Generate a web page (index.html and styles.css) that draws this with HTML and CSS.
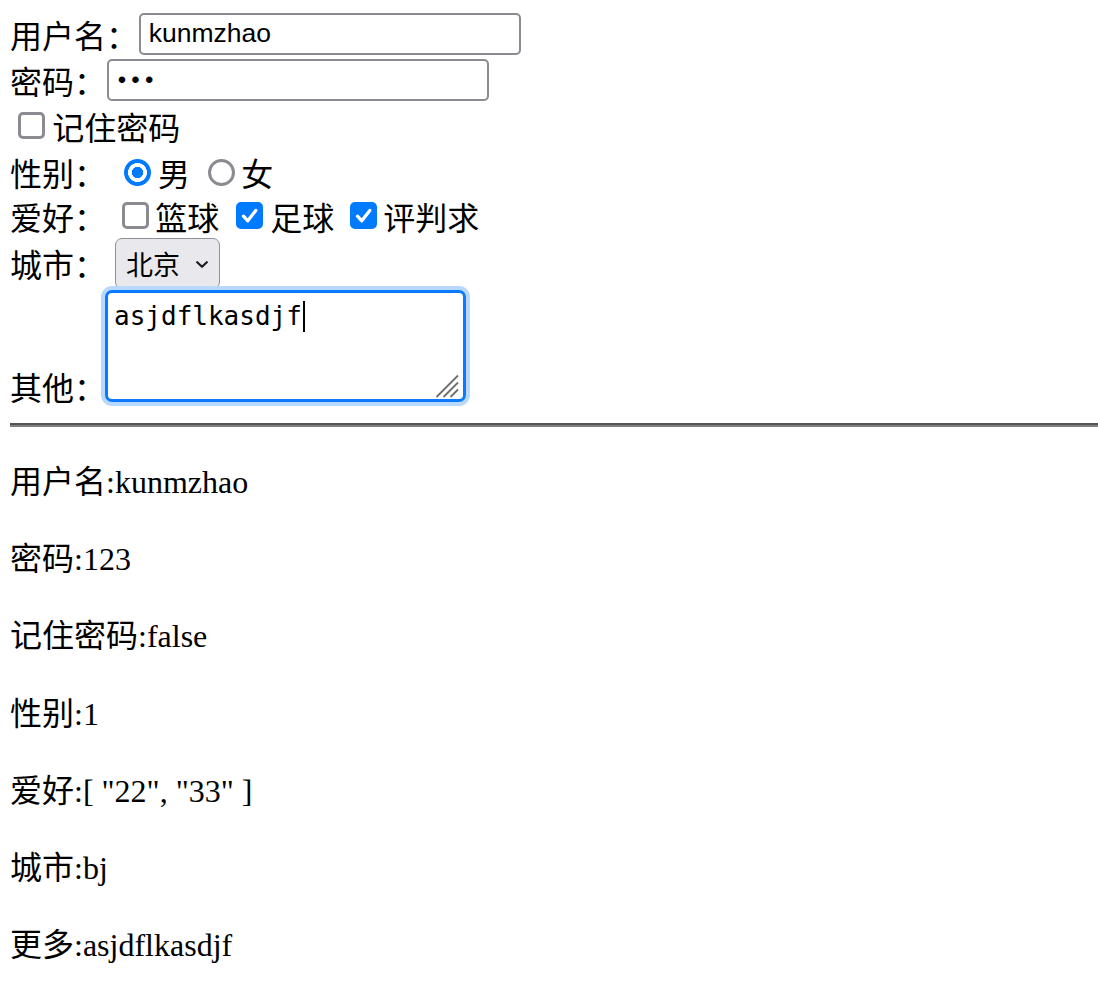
FILE: index.html
```html
<!DOCTYPE html>
<html lang="zh-CN">
<head>
<meta charset="utf-8">
<title>表单</title>
<link rel="stylesheet" href="styles.css">
</head>
<body>
<div class="page">
  <form class="form">
    <div class="row r1"><label class="lbl" for="u">用户名：</label><input id="u" class="text" type="text" value="kunmzhao"></div>
    <div class="row r2"><label class="lbl" for="p">密码：</label><input id="p" class="text pwd" type="password" value="123"></div>
    <div class="row r3">
      <label class="opt"><span class="cbwrap cb-remember"><input type="checkbox" class="cb"></span>记住密码</label>
    </div>
    <div class="row r4">
      <span class="lbl">性别：</span>
      <label class="opt"><input type="radio" name="g" class="rd rd1" value="1" checked>男</label>
      <label class="opt"><input type="radio" name="g" class="rd rd2" value="2">女</label>
    </div>
    <div class="row r5">
      <span class="lbl">爱好：</span>
      <label class="opt"><span class="cbwrap cb1"><input type="checkbox" class="cb" value="11"></span>篮球</label>
      <label class="opt"><span class="cbwrap cb2"><input type="checkbox" class="cb" value="22" checked><svg class="tick" viewBox="0 0 27 27"><path d="M7.5 14.2l4.3 4.6L19.8 8.4"/></svg></span>足球</label>
      <label class="opt"><span class="cbwrap cb3"><input type="checkbox" class="cb" value="33" checked><svg class="tick" viewBox="0 0 27 27"><path d="M7.5 14.2l4.3 4.6L19.8 8.4"/></svg></span>评判求</label>
    </div>
    <div class="row r6">
      <span class="lbl">城市：</span>
      <span class="selwrap">
        <select class="sel"><option value="bj">北京</option><option value="sh">上海</option></select>
        <svg class="chev" viewBox="0 0 12 7"><path d="M1.2 1.2l4.8 4.6 4.8-4.6"/></svg>
      </span>
    </div>
    <div class="row r7">
      <span class="lbl">其他：</span>
      <span class="tawrap">
        <textarea class="ta">asjdflkasdjf</textarea>
        <span class="caret"></span>
        <svg class="grip" viewBox="0 0 24 24"><path d="M1.5 23L23 1.5M8.5 23L23 8.5M15.5 23L23 15.5"/></svg>
      </span>
    </div>
  </form>
  <hr class="sep">
  <div class="result">
    <p>用户名:kunmzhao</p>
    <p>密码:123</p>
    <p>记住密码:false</p>
    <p>性别:1</p>
    <p>爱好:[ "22", "33" ]</p>
    <p>城市:bj</p>
    <p>更多:asjdflkasdjf</p>
  </div>
</div>
</body>
</html>
```

FILE: styles.css
```css
html, body {
  margin: 0;
  padding: 0;
  background: #fff;
  color: #000;
}

.page {
  padding: 10px 0 0 10px;
}

.form {
  margin: 0;
  font-family: "Noto Sans CJK SC", sans-serif;
  font-size: 32px;
  line-height: 32px;
}

.row {
  display: flex;
  align-items: center;
  white-space: nowrap;
}

.r1 { height: 47.7px; }
.r2 { height: 44.6px; }
.r3 { height: 46.8px; }
.r4 { height: 45.9px; }
.r5 { height: 42px; }
.r6 { height: 53px; }
.r7 { height: 112px; align-items: flex-end; }

.lbl {
  display: inline-block;
}

.opt {
  display: inline-flex;
  align-items: center;
}

/* text inputs */
.text {
  box-sizing: border-box;
  width: 382px;
  height: 42.3px;
  margin: 0 0 0 0.7px;
  padding: 0 8px;
  border: 2px solid #8b8b92;
  border-radius: 5px;
  background: #fff;
  color: #000;
  font-family: "Liberation Sans", sans-serif;
  font-size: 26.5px;
  outline: none;
}

.pwd {
  font-size: 24px;
  letter-spacing: 5.2px;
  padding-left: 9px;
}

/* checkboxes */
.cbwrap {
  display: inline-grid;
  margin-right: 7px;
}

.cbwrap > * {
  grid-area: 1 / 1;
}

.cb {
  appearance: none;
  -webkit-appearance: none;
  box-sizing: border-box;
  width: 27px;
  height: 27px;
  margin: 0;
  border: 3.4px solid #8b8b92;
  border-radius: 5px;
  background: #fff;
}

.cb:checked {
  background: #007aff;
  border-color: #007aff;
}

.tick {
  width: 27px;
  height: 27px;
  fill: none;
  stroke: #fff;
  stroke-width: 3.3;
  stroke-linecap: round;
  stroke-linejoin: round;
  pointer-events: none;
}

.cb-remember { margin-left: 8.3px; }
.cb1 { margin-left: 16.3px; margin-right: 6px; }
.cb2 { margin-left: 17px; margin-right: 7px; }
.cb3 { margin-left: 16px; margin-right: 6px; }

/* radios */
.rd {
  appearance: none;
  -webkit-appearance: none;
  box-sizing: border-box;
  width: 27px;
  height: 27px;
  margin: 0 7px 0 0;
  border: 3.6px solid #8b8b92;
  border-radius: 50%;
  background: #fff;
}

.rd:checked {
  border: none;
  background: radial-gradient(circle, #007aff 0 5.4px, #fff 5.9px 9.2px, #007aff 9.7px);
}

.rd1 { margin-left: 18px; }
.rd2 { margin-left: 18.3px; margin-right: 6px; }

/* select */
.selwrap {
  display: inline-grid;
  margin-left: 9px;
}

.selwrap > * {
  grid-area: 1 / 1;
}

.sel {
  appearance: none;
  -webkit-appearance: none;
  box-sizing: border-box;
  width: 105px;
  height: 51px;
  margin: 0;
  padding: 0 0 0 10px;
  border: 1.6px solid #8f8f96;
  border-radius: 7px;
  background: #e9e9ed;
  color: #000;
  font-family: "Noto Sans CJK SC", sans-serif;
  font-size: 27px;
}

.chev {
  justify-self: end;
  align-self: center;
  width: 12px;
  height: 7px;
  margin: 2px 12px 0 0;
  fill: none;
  stroke: #1c1c1c;
  stroke-width: 2.2;
  stroke-linecap: round;
  stroke-linejoin: round;
  pointer-events: none;
}

/* textarea */
.tawrap {
  display: inline-grid;
  margin-left: -1px;
}

.tawrap > * {
  grid-area: 1 / 1;
}

.ta {
  box-sizing: border-box;
  width: 361px;
  height: 112px;
  margin: 0;
  padding: 8.5px 6px;
  border: 3.5px solid #0a7aff;
  border-radius: 7px;
  box-shadow: 0 0 0 4px #b8d8fe;
  background: #fff;
  color: #000;
  font-family: "DejaVu Sans Mono", monospace;
  font-size: 26px;
  line-height: 30px;
  resize: none;
  outline: none;
}

.caret {
  justify-self: start;
  align-self: start;
  width: 2px;
  height: 31px;
  margin: 11px 0 0 197.5px;
  background: #000;
}

.grip {
  justify-self: end;
  align-self: end;
  width: 24px;
  height: 24px;
  margin: 0 7px 4px 0;
  fill: none;
  stroke: #6e6e6e;
  stroke-width: 1.8;
  pointer-events: none;
}

/* separator */
.sep {
  height: 0;
  margin: 21px 0 0;
  border: none;
  border-top: 2px solid #555;
  border-bottom: 2px solid #808080;
}

/* result */
.result {
  margin-top: 31px;
  font-family: "Liberation Serif", "Noto Sans CJK SC", serif;
  font-size: 32px;
  line-height: 48px;
}

.result p {
  margin: 0 0 29.2px;
}
```
